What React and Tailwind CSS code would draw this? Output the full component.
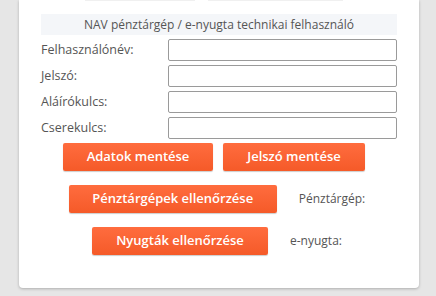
export default function App() {
  const fields = ["Felhasználónév:", "Jelszó:", "Aláírókulcs:", "Cserekulcs:"];
  const btn =
    "h-[28px] rounded-[2px] bg-gradient-to-b from-[#ff6c3e] to-[#f55a28] text-white text-[13px] font-semibold shadow-[0_1px_1px_rgba(0,0,0,0.2)]";

  return (
    <div
      className="w-[436px] h-[296px] bg-[#e6e6e6] overflow-hidden"
      style={{ fontFamily: '"Open Sans", "Liberation Sans", sans-serif' }}
    >
      <div className="relative ml-[19px] w-[400px] h-[288px] bg-white rounded-b-[4px] shadow-[0_1px_3px_rgba(0,0,0,0.25)] pt-[14px] px-[22px]">
        <div className="absolute top-0 left-[66px] w-[110px] h-px bg-[#f0f0f0]" />
        <div className="absolute top-0 left-[189px] w-[135px] h-px bg-[#f0f0f0]" />
        <div className="h-[21px] bg-[#f4f6f9] flex items-center justify-center text-[12px] text-[#555]">
          NAV pénztárgép / e-nyugta technikai felhasználó
        </div>
        <div className="mt-[4px] flex flex-col gap-[4px]">
          {fields.map((f) => (
            <div key={f} className="flex items-center">
              <label className="w-[127px] text-[12.5px] text-[#555]">{f}</label>
              <input
                type={f === "Jelszó:" ? "password" : "text"}
                className="w-[230px] h-[22px] border border-[#9a9a9a] rounded-[2px] bg-white"
              />
            </div>
          ))}
        </div>
        <div className="mt-[4px] flex justify-center gap-[10px] pr-[10px] ml-[-22px] mr-[-22px]">
          <button className={`${btn} w-[150px]`}>Adatok mentése</button>
          <button className={`${btn} w-[142px]`}>Jelszó mentése</button>
        </div>
        <div className="mt-[14px] flex justify-center items-center ml-[-22px] mr-[-22px]">
          <button className={`${btn} w-[208px]`}>Pénztárgépek ellenőrzése</button>
          <span className="ml-[22px] mr-[4px] text-[12px] text-[#555]">Pénztárgép:</span>
        </div>
        <div className="mt-[14px] flex justify-center items-center ml-[-22px] mr-[-22px]">
          <button className={`${btn} w-[176px]`}>Nyugták ellenőrzése</button>
          <span className="ml-[22px] mr-[4px] text-[12px] text-[#555]">e-nyugta:</span>
        </div>
      </div>
    </div>
  );
}
